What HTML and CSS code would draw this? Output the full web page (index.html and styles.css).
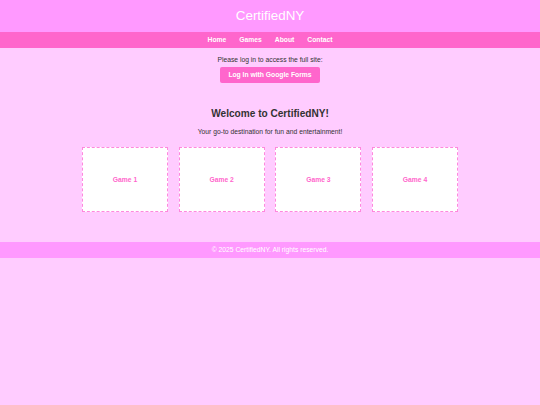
FILE: index.html
```html
<!DOCTYPE html>
<html lang="en">
<head>
<meta charset="utf-8">
<title>CertifiedNY</title>
<link rel="stylesheet" href="styles.css">
</head>
<body>
<header class="site-header">
  <h1 class="site-title">CertifiedNY</h1>
</header>
<nav class="site-nav">
  <a href="#" class="nav-link">Home</a>
  <a href="#" class="nav-link">Games</a>
  <a href="#" class="nav-link">About</a>
  <a href="#" class="nav-link">Contact</a>
</nav>
<section class="login">
  <p class="login-text">Please log in to access the full site:</p>
  <button class="login-btn">Log In with Google Forms</button>
</section>
<main class="welcome">
  <h2 class="welcome-title">Welcome to CertifiedNY!</h2>
  <p class="welcome-text">Your go-to destination for fun and entertainment!</p>
  <div class="games">
    <div class="game">Game 1</div>
    <div class="game">Game 2</div>
    <div class="game">Game 3</div>
    <div class="game">Game 4</div>
  </div>
</main>
<footer class="site-footer">© 2025 CertifiedNY. All rights reserved.</footer>
</body>
</html>
```

FILE: styles.css
```css
html, body {
  margin: 0;
  padding: 0;
}
body {
  background: #ffccff;
  font-family: "Liberation Sans", Arial, sans-serif;
  font-size: 6.75px;
  line-height: 1.15;
  color: #333;
}
.site-header {
  background: #ff99ff;
  padding: 8.33px 0;
  text-align: center;
}
.site-title {
  margin: 0;
  font-size: 13.4px;
  font-weight: normal;
  color: #fff;
  line-height: 15.33px;
}
.site-nav {
  background: #ff66cc;
  padding: 4.17px 0;
  text-align: center;
  line-height: 7.67px;
}
.nav-link {
  color: #fff;
  font-weight: bold;
  text-decoration: none;
  margin: 0 5.55px;
}
.login {
  text-align: center;
  padding: 8.4px 0 0;
}
.login-text {
  margin: 0 0 2.6px;
  line-height: 7.67px;
}
.login-btn {
  background: #ff66cc;
  color: #fff;
  border: none;
  border-radius: 2px;
  padding: 4.17px 8.33px;
  font-family: inherit;
  font-size: 6.75px;
  font-weight: bold;
  line-height: 7.67px;
  display: inline-block;
  vertical-align: top;
}
.welcome {
  text-align: center;
  padding-top: 25.6px;
}
.welcome-title {
  margin: 0;
  font-size: 10.1px;
  line-height: 11.5px;
  color: #333;
}
.welcome-text {
  margin: 8.1px 0 0;
  line-height: 7.67px;
}
.games {
  display: flex;
  justify-content: center;
  gap: 10.7px;
  margin-top: 11.5px;
}
.game {
  width: 84px;
  height: 63px;
  background: #fff;
  border: 1px dashed #ff88dd;
  color: #ff66cc;
  font-weight: bold;
  display: flex;
  align-items: center;
  justify-content: center;
}
.site-footer {
  margin-top: 30px;
  background: #ff99ff;
  color: #fff;
  text-align: center;
  padding: 4.17px 0;
  line-height: 7.67px;
}
```
